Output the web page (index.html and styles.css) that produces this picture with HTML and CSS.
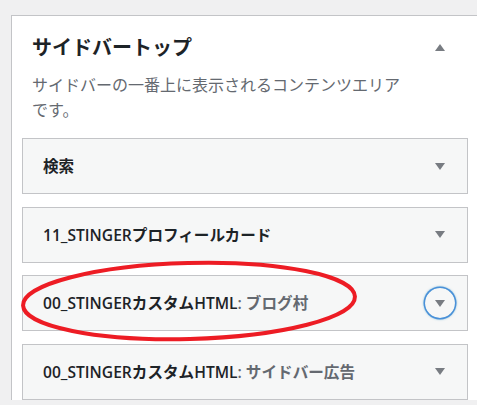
FILE: index.html
```html
<!DOCTYPE html>
<html lang="ja">
<head>
    <meta charset="UTF-8">
    <meta name="viewport" content="width=device-width, initial-scale=1.0">
    <title>ウィジェット</title>
    <link rel="stylesheet" href="styles.css">
</head>
<body>

    <div class="wrap">
        <div class="sidebar">
            <div class="sidebar-head">
                <h2>サイドバートップ</h2>
                <button class="toggle" type="button" aria-label="閉じる">
                    <svg width="10" height="7" viewBox="0 0 10 7"><polygon points="5,0 10,7 0,7"/></svg>
                </button>
            </div>
            <p class="description">サイドバーの一番上に表示されるコンテンツエリアです。</p>

            <div class="widget">
                <h3>検索</h3>
                <button class="toggle" type="button" aria-label="開く">
                    <svg width="10" height="7" viewBox="0 0 10 7"><polygon points="0,0 10,0 5,7"/></svg>
                </button>
            </div>
            <div class="widget">
                <h3>11_STINGERプロフィールカード</h3>
                <button class="toggle" type="button" aria-label="開く">
                    <svg width="10" height="7" viewBox="0 0 10 7"><polygon points="0,0 10,0 5,7"/></svg>
                </button>
            </div>
            <div class="widget">
                <h3>00_STINGERカスタムHTML<span class="in-title">: ブログ村</span></h3>
                <button class="toggle focused" type="button" aria-label="開く">
                    <svg width="10" height="7" viewBox="0 0 10 7"><polygon points="0,0 10,0 5,7"/></svg>
                </button>
            </div>
            <div class="widget">
                <h3>00_STINGERカスタムHTML<span class="in-title">: サイドバー広告</span></h3>
                <button class="toggle" type="button" aria-label="開く">
                    <svg width="10" height="7" viewBox="0 0 10 7"><polygon points="0,0 10,0 5,7"/></svg>
                </button>
            </div>
        </div>

        <!-- hand-drawn mark over the 3rd widget -->
        <svg class="mark" width="477" height="405" viewBox="0 0 477 405">
            <ellipse cx="189" cy="301" rx="166" ry="38" transform="rotate(-1.5 189 301)"/>
        </svg>
    </div>

</body>
</html>
```

FILE: styles.css
```css
body {
    margin: 0;
    background-color: #f0f0f1;
    font-family: 'Open Sans', 'Noto Sans CJK JP', sans-serif;
    color: #1d2327;
    overflow: hidden;
}

.wrap {
    position: relative;
    height: 405px;
    overflow: hidden;
    padding: 15px 0 0 11px;
    box-sizing: border-box;
}

.sidebar {
    width: 468px;
    box-sizing: border-box;
    padding: 0 10px;
    background-color: #fff;
    border: 1px solid #c3c4c7;
    border-bottom: 0;
}

.sidebar-head {
    display: flex;
    align-items: center;
    justify-content: space-between;
    padding: 16px 13px 0 10px;
}

.sidebar-head h2 {
    margin: 0;
    font-family: 'Noto Sans CJK JP', sans-serif;
    font-size: 20px;
    font-weight: 700;
    line-height: 28px;
}

.description {
    width: 380px;
    margin: 10px 0 16px 10px;
    font-family: 'Noto Sans CJK JP', sans-serif;
    font-size: 16px;
    line-height: 25px;
    color: #646970;
}

.toggle {
    display: flex;
    align-items: center;
    justify-content: center;
    width: 30px;
    height: 30px;
    padding: 0;
    border: 0;
    border-radius: 50%;
    background: none;
}

.toggle svg {
    fill: #787c82;
}

.toggle.focused {
    box-shadow: 0 0 0 1.5px #4a90d9, 0 0 2px 1.5px rgba(30, 140, 190, 0.5);
}

.widget {
    display: flex;
    align-items: center;
    justify-content: space-between;
    height: 56px;
    box-sizing: border-box;
    margin-bottom: 12.5px;
    padding: 0 12px 0 20px;
    background-color: #f6f7f7;
    border: 1px solid #c3c4c7;
}

.widget h3 {
    margin: 0;
    font-size: 15.6px;
    font-weight: 600;
    line-height: 20px;
}

.in-title {
    color: #646970;
}

.mark {
    position: absolute;
    top: 0;
    left: 0;
    pointer-events: none;
}

.mark ellipse {
    fill: none;
    stroke: #ed1c24;
    stroke-width: 4;
}
```
